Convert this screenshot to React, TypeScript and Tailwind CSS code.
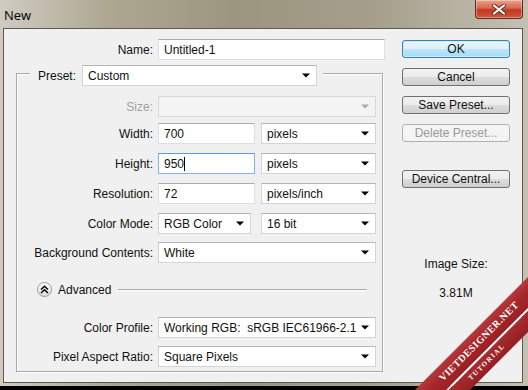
import React from 'react';

const Arrow = ({ muted }: { muted?: boolean }) => (
  <svg width="8" height="5" viewBox="0 0 8 5" className="shrink-0">
    <path d="M0 0.5h8L4 4.5z" fill={muted ? '#a8a8a8' : '#000'} />
  </svg>
);

const Field = ({ value, className, focused }: { value: string; className: string; focused?: boolean }) => (
  <div
    className={`h-[21px] bg-white border flex items-center pl-[5px] ${className} ${
      focused ? 'border-[#7eb4ea] border-t-[#569de5]' : 'border-[#dcdfe4] border-t-[#abadb3]'
    }`}
  >
    {value}
    {focused && <span className="w-px h-[14px] bg-black" />}
  </div>
);

const Select = ({ value, className, disabled }: { value: string; className: string; disabled?: boolean }) => (
  <div
    className={`h-[21px] border flex items-center pl-[5px] pr-[6px] ${className} ${
      disabled ? 'bg-[#f4f4f4] border-[#d9d9d9]' : 'bg-white border-[#d4d4d4] border-t-[#b5b5b5]'
    }`}
  >
    <span className="flex-1 whitespace-pre">{value}</span>
    <Arrow muted={disabled} />
  </div>
);

const Row = ({ label, children, className, muted }: { label: string; children: React.ReactNode; className: string; muted?: boolean }) => (
  <div className={`flex items-center gap-[5px] ${className}`}>
    <span className={`w-[136px] text-right ${muted ? 'text-[#a0a0a0]' : ''}`}>{label}</span>
    {children}
  </div>
);

const Button = ({ label, className, primary, disabled }: { label: string; className: string; primary?: boolean; disabled?: boolean }) => (
  <div
    className={`h-[18px] w-[108px] rounded-[3px] border flex items-center justify-center ${className} ${
      primary
        ? 'border-[#3c7fb1] bg-[linear-gradient(#eaf6fd_0%,#d9f0fc_50%,#bee6fd_51%,#a7d9f5_100%)] shadow-[inset_0_0_0_1px_#c6edff]'
        : disabled
        ? 'border-[#adb2b5] bg-[#f4f4f4] text-[#9a9a9a]'
        : 'border-[#707070] bg-[linear-gradient(#f2f2f2_0%,#ebebeb_50%,#dddddd_51%,#cfcfcf_100%)]'
    }`}
  >
    {label}
  </div>
);

export default function App() {
  return (
    <div className="w-[528px] h-[390px] bg-black relative overflow-hidden font-['Liberation_Sans',Arial,sans-serif] text-[12px] text-[#111]">
      <div className="h-[386px] flex flex-col bg-[linear-gradient(90deg,#cfcbc1_0%,#aea893_20%,#9c9681_45%,#a49e8a_70%,#c4c0b4_100%)]">
        {/* title bar */}
        <div className="h-[28px] flex items-start shrink-0">
          <span className="pl-[4px] pt-[6px] text-[13px] font-['Open_Sans',sans-serif] text-black">New</span>
          <div className="ml-auto mr-[5px] w-[48px] h-[19px] rounded-b-[4px] border border-t-0 border-[#5f2a1d] bg-[linear-gradient(#e9a28f_0%,#d7664b_45%,#c2381f_55%,#cf5a3c_100%)] flex items-center justify-center shadow-[inset_0_0_0_1px_rgba(255,255,255,0.35)]">
            <svg width="14" height="11" viewBox="0 0 14 11">
              <path d="M2 1.5l10 8M12 1.5l-10 8" stroke="#5a2a20" strokeWidth="4" strokeLinecap="round" />
              <path d="M2 1.5l10 8M12 1.5l-10 8" stroke="#fff" strokeWidth="2.2" strokeLinecap="round" />
            </svg>
          </div>
        </div>

        {/* client area */}
        <div className="ml-[3px] mr-[5px] h-[355px] border border-[#5d5a52] bg-[#f0f0f0] flex">
          {/* left column */}
          <div className="w-[398px] pt-[10px]">
            <div className="flex items-center gap-[5px]">
              <span className="w-[149px] text-right">Name:</span>
              <Field value="Untitled-1" className="w-[227px]" />
            </div>

            <div className="ml-[12px] mt-[13px] w-[367px] border border-[#a9a9a9] shadow-[1px_1px_0_#fff,inset_1px_1px_0_#fff] pb-[4px]">
              <div className="-mt-[9px] ml-[13px] w-fit bg-[#f0f0f0] flex items-center pl-[8px] pr-[6px]">
                <span className="w-[40px]">Preset:</span>
                <Select value="Custom" className="ml-[4px] w-[235px]" />
              </div>

              <Row label="Size:" muted className="mt-[10px]">
                <Select value="" disabled className="w-[218px]" />
              </Row>
              <Row label="Width:" className="mt-[6px]">
                <Field value="700" className="w-[97px]" />
                <Select value="pixels" className="ml-[1px] w-[115px]" />
              </Row>
              <Row label="Height:" className="mt-[9px]">
                <Field value="950" focused className="w-[97px]" />
                <Select value="pixels" className="ml-[1px] w-[115px]" />
              </Row>
              <Row label="Resolution:" className="mt-[9px]">
                <Field value="72" className="w-[97px]" />
                <Select value="pixels/inch" className="ml-[1px] w-[115px]" />
              </Row>
              <Row label="Color Mode:" className="mt-[9px]">
                <Select value="RGB Color" className="w-[93px]" />
                <Select value="16 bit" className="ml-[5px] w-[115px]" />
              </Row>
              <Row label="Background Contents:" className="mt-[8px]">
                <Select value="White" className="w-[218px]" />
              </Row>

              <div className="mt-[19px] ml-[20px] mr-[15px] h-[15px] flex items-center">
                <div className="w-[15px] h-[15px] rounded-full border border-[#9a9a9a] bg-[linear-gradient(#ffffff,#dcdcdc)] flex items-center justify-center">
                  <svg width="9" height="9" viewBox="0 0 9 9">
                    <path d="M1 4.5L4.5 1.2L8 4.5M1 8L4.5 4.7L8 8" stroke="#000" strokeWidth="1.4" fill="none" />
                  </svg>
                </div>
                <span className="ml-[6px]">Advanced</span>
                <div className="ml-[7px] flex-1 h-[2px] border-t border-[#a9a9a9] border-b border-b-white" />
              </div>

              <Row label="Color Profile:" className="mt-[20px]">
                <Select value="Working RGB:  sRGB IEC61966-2.1" className="w-[218px]" />
              </Row>
              <Row label="Pixel Aspect Ratio:" className="mt-[8px]">
                <Select value="Square Pixels" className="w-[218px]" />
              </Row>
            </div>
          </div>

          {/* right column */}
          <div className="w-[108px] pt-[11px] flex flex-col">
            <Button label="OK" primary className="" />
            <Button label="Cancel" className="mt-[10px]" />
            <Button label="Save Preset..." className="mt-[10px]" />
            <Button label="Delete Preset..." disabled className="mt-[10px]" />
            <Button label="Device Central..." className="mt-[28px]" />
            <div className="mt-[67px] text-center">Image Size:</div>
            <div className="mt-[11px] text-center">3.81M</div>
          </div>
        </div>
      </div>

      {/* watermark ribbon */}
      <div className="absolute left-[365px] top-[328px] w-[240px] h-[39px] -rotate-45 flex flex-col pointer-events-none">
        <div className="h-[22px] bg-[linear-gradient(#b8383a,#a32528_50%,#9a2024)] flex items-center justify-center text-white text-[10px] leading-none font-bold tracking-[0.5px] font-['Liberation_Serif',serif]">
          VIETDESIGNER.NET
        </div>
        <div className="h-[2px] bg-white/90" />
        <div className="h-[15px] bg-[linear-gradient(#a82a2d,#942024)] flex items-center justify-center pr-[18px] text-white text-[7px] leading-none font-bold tracking-[1.4px] font-['Liberation_Serif',serif]">
          TUTORIAL
        </div>
      </div>
    </div>
  );
}
